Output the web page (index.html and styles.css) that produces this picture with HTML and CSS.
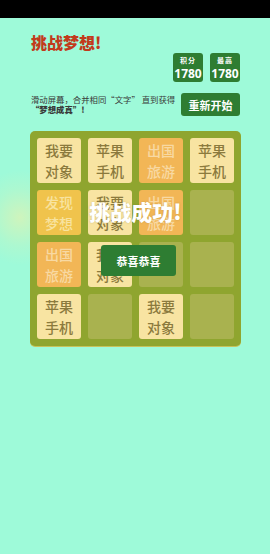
FILE: index.html
```html
<!DOCTYPE html>
<html lang="zh">
<head>
<meta charset="utf-8">
<title>挑战梦想</title>
<link rel="stylesheet" href="styles.css">
</head>
<body>
<div class="status"></div>
<div class="glow"></div>
<main class="page">
  <h1 class="title">挑战梦想!</h1>
  <div class="scores">
    <div class="score"><span class="score-label">积分</span><span class="score-num">1780</span></div>
    <div class="score"><span class="score-label">最高</span><span class="score-num">1780</span></div>
  </div>
  <div class="intro">
    <p class="desc">滑动屏幕，合并相同“文字” 直到获得<br><b>“梦想成真”!</b></p>
    <button class="restart">重新开始</button>
  </div>
  <div class="board">
    <div class="cell pale">我要<br>对象</div>
    <div class="cell pale">苹果<br>手机</div>
    <div class="cell orange">出国<br>旅游</div>
    <div class="cell pale">苹果<br>手机</div>

    <div class="cell gold">发现<br>梦想</div>
    <div class="cell pale">我要<br>对象</div>
    <div class="cell orange">出国<br>旅游</div>
    <div class="cell empty"></div>

    <div class="cell orange">出国<br>旅游</div>
    <div class="cell pale">我要<br>对象</div>
    <div class="cell empty"></div>
    <div class="cell empty"></div>

    <div class="cell pale">苹果<br>手机</div>
    <div class="cell empty"></div>
    <div class="cell pale">我要<br>对象</div>
    <div class="cell empty"></div>

    <div class="overlay">
      <div class="win">挑战成功!</div>
      <button class="congrats">恭喜恭喜</button>
    </div>
  </div>
</main>
</body>
</html>
```

FILE: styles.css
```css
* { box-sizing: border-box; }
html, body { margin: 0; padding: 0; }
body {
  width: 270px;
  height: 554px;
  background: #9efad9;
  font-family: "Noto Sans CJK SC", "Noto Sans", sans-serif;
  position: relative;
  overflow: hidden;
}
.status { height: 18px; background: #000; }
.glow {
  position: absolute;
  left: -25px;
  top: 170px;
  width: 90px;
  height: 95px;
  border-radius: 50%;
  background: radial-gradient(closest-side, rgba(255, 238, 160, 0.5), rgba(255, 238, 160, 0.15) 60%, rgba(255, 238, 160, 0) 100%);
}
.page {
  position: relative;
  padding: 14px 29px 0 30px;
  display: flex;
  flex-direction: column;
}
.title {
  margin: 0 0 0 1px;
  font-size: 16px;
  line-height: 20px;
  font-weight: 900;
  color: #c23a1c;
}
.scores {
  display: flex;
  justify-content: flex-end;
  gap: 7px;
  margin-top: 1px;
  padding-right: 1px;
}
.score {
  width: 30px;
  height: 29px;
  background: #2e7d32;
  border-radius: 3px;
  display: flex;
  flex-direction: column;
  align-items: center;
  color: #fff;
}
.score-label {
  font-size: 7px;
  line-height: 7px;
  margin-top: 4px;
  letter-spacing: 1px;
  font-weight: 700;
}
.score-num {
  font-size: 12px;
  line-height: 14px;
  margin-top: 3px;
  font-weight: 700;
  font-family: "Noto Sans", sans-serif;
}
.intro {
  display: flex;
  justify-content: space-between;
  align-items: flex-start;
  margin-top: 11px;
}
.desc {
  margin: 1px 0 0 1px;
  font-size: 8.4px;
  line-height: 10px;
  color: #3a3a3a;
}
.desc b { font-weight: 900; }
.restart {
  width: 59px;
  height: 23px;
  border: 0;
  border-radius: 3px;
  background: #2e7d32;
  color: #fff;
  font-family: inherit;
  font-size: 11px;
  font-weight: 700;
  padding: 0;
  margin-right: 1px;
}
.board {
  position: relative;
  margin-top: 15px;
  width: 211px;
  padding: 7px;
  background: #8fa52f;
  border-radius: 5px;
  display: grid;
  grid-template-columns: repeat(4, 44px);
  grid-auto-rows: 45px;
  gap: 7px 7px;
  box-shadow: 0 1px 0 #c8c25a;
}
.cell {
  border-radius: 3px;
  display: flex;
  align-items: center;
  justify-content: center;
  text-align: center;
  font-size: 14px;
  line-height: 21px;
  font-weight: 500;
}
.pale { background: #f8e4a2; color: #8b7a3d; }
.orange { background: #f2b656; color: #f8d9a2; }
.gold { background: #f0c34c; color: #f8e3a0; }
.empty { background: #a9b24f; }
.overlay {
  position: absolute;
  inset: 0;
  display: flex;
  flex-direction: column;
  align-items: center;
  padding-top: 66px;
  gap: 20px;
}
.win {
  font-size: 21px;
  line-height: 28px;
  font-weight: 900;
  color: #fff;
  text-shadow: 0 0 2px rgba(120, 110, 40, 0.35);
}
.congrats {
  width: 75px;
  height: 31px;
  border: 0;
  border-radius: 3px;
  background: #2e7d32;
  color: #fff;
  font-family: inherit;
  font-size: 11px;
  font-weight: 700;
  margin-left: 6px;
  padding: 0;
}
```
